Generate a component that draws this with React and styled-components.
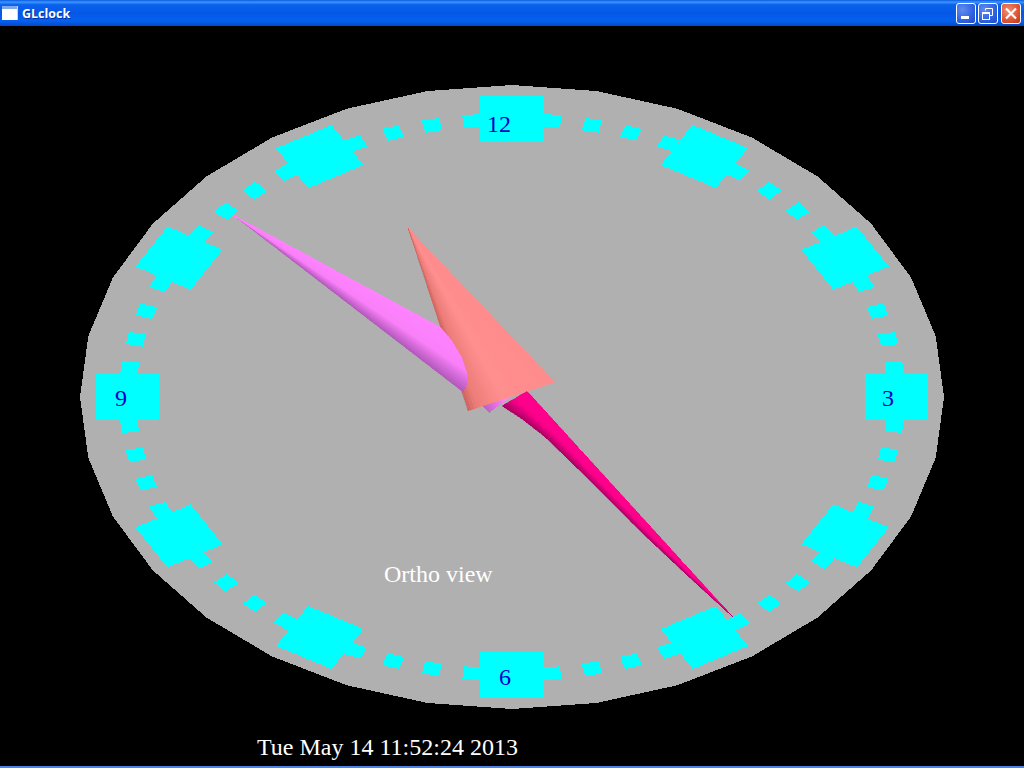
import React from 'react'
import styled, { createGlobalStyle } from 'styled-components'

const GlobalStyle = createGlobalStyle`
  html, body { margin: 0; padding: 0; background: #000; overflow: hidden; }
`

const Win = styled.div`
  width: 1024px;
  height: 768px;
  display: flex;
  flex-direction: column;
  background: #000;
`

const TitleBar = styled.div`
  height: 26px;
  flex: none;
  display: flex;
  align-items: center;
  padding: 0 3px 0 2px;
  box-sizing: border-box;
  background: linear-gradient(180deg, #0a5ae0 0%, #3d95ff 8%, #0a62ec 18%, #0558e6 50%, #0560ee 80%, #0548c8 100%);
`

const TitleIcon = styled.svg`
  width: 16px;
  height: 14px;
  flex: none;
  margin-right: 4px;
`

const TitleText = styled.span`
  flex: 1;
  color: #fff;
  font: bold 12.5px "Open Sans", "Liberation Sans", sans-serif;
  text-shadow: 1px 1px 0 #0a2f9c;
`

const Btn = styled.div`
  width: 20px;
  height: 21px;
  margin-left: ${p => p.$gap}px;
  box-sizing: border-box;
  border: 1px solid #fff;
  border-radius: 3px;
  display: flex;
  align-items: center;
  justify-content: center;
  background: ${p => p.$close
    ? 'radial-gradient(circle at 35% 35%, #f09070 0%, #e0583a 55%, #c03510 100%)'
    : 'radial-gradient(circle at 30% 30%, #5f8cf0 0%, #2f62e0 60%, #2248c8 100%)'};
`

const Canvas = styled.svg`
  display: block;
  flex: 1;
  width: 1024px;
  height: 740px;
  background: #000;
`

const BottomEdge = styled.div`
  height: 2px;
  flex: none;
  background: #4a84e8;
`

const Sharp = styled.polygon`
  shape-rendering: crispEdges;
`

const Label = styled.text`
  font-family: "Liberation Serif", serif;
  font-size: 24px;
  fill: ${p => p.$color};
`

const CX = 512
const CY = 397
const RX = 432
const RY = 312

// unit dial coords -> screen
const toScreen = (u, v) => [CX + RX * u, CY + RY * v]

const pts = list => list.map(p => p.map(n => n.toFixed(2)).join(',')).join(' ')

const dialPoints = Array.from({ length: 32 }, (_, i) => {
  const a = (i * Math.PI) / 16
  return toScreen(Math.cos(a), Math.sin(a))
})

// square on the dial at some minute, radius .89
const tickPoints = (minute, size) => {
  const a = (minute * Math.PI) / 30
  const s = Math.sin(a)
  const c = Math.cos(a)
  const h = size / 2
  return [[-h, -h], [h, -h], [h, h], [-h, h]].map(([t, r]) =>
    toScreen(s * (0.89 + r) + c * t, -c * (0.89 + r) + s * t)
  )
}

const lerp = (a, b, t) => a + (b - a) * t

const mixStops = (stops, t) => {
  let i = 0
  while (i < stops.length - 2 && t > stops[i + 1][0]) i++
  const [t0, c0] = stops[i]
  const [t1, c1] = stops[i + 1]
  const k = Math.min(1, Math.max(0, (t - t0) / (t1 - t0)))
  return `rgb(${c0.map((v, n) => Math.round(lerp(v, c1[n], k))).join(',')})`
}

// walk along a polyline, evenly by length
const sample = (line, count) => {
  const lens = line.slice(1).map((p, i) => Math.hypot(p[0] - line[i][0], p[1] - line[i][1]))
  const total = lens.reduce((a, b) => a + b, 0)
  return Array.from({ length: count + 1 }, (_, n) => {
    let d = (n / count) * total
    let i = 0
    while (i < lens.length - 1 && d > lens[i]) { d -= lens[i]; i++ }
    const k = d / lens[i]
    return [lerp(line[i][0], line[i + 1][0], k), lerp(line[i][1], line[i + 1][1], k)]
  })
}

// a hand is a fan of flat triangles from the tip, like the GL cone
function Hand({ tip, base, stops, slices = 28 }) {
  const edge = sample(base, slices)
  const parts = edge.slice(1).map((p, i) => {
    const col = mixStops(stops, (i + 0.5) / slices)
    return <Sharp key={i} points={pts([tip, edge[i], p])} fill={col} stroke={col} strokeWidth="0.4" />
  })
  // the bright side goes on top so the thin tip stays bright
  return <g>{parts.reverse()}</g>
}

// the long hand flares at its base, so it is strips between its two edges
function Band({ left, right, stops, strips = 16, steps = 60 }) {
  const a = sample(left, steps)
  const b = sample(right, steps)
  const at = t => a.map((p, i) => [lerp(p[0], b[i][0], t), lerp(p[1], b[i][1], t)])
  const parts = Array.from({ length: strips }, (_, n) => {
    const col = mixStops(stops, (n + 0.5) / strips)
    const outline = [...at(n / strips), ...at((n + 1) / strips).reverse()]
    return <Sharp key={n} points={pts(outline)} fill={col} stroke={col} strokeWidth="0.4" />
  })
  return <g>{parts.reverse()}</g>
}

const magentaStops = [[0, [168, 0, 100]], [0.3, [225, 0, 125]], [0.5, [255, 0, 140]], [1, [255, 0, 140]]]
const salmonStops = [[0, [205, 100, 96]], [0.1, [235, 125, 120]], [0.4, [255, 142, 142]], [1, [255, 140, 140]]]
const purpleStops = [[0, [255, 130, 255]], [0.7, [250, 128, 250]], [0.9, [205, 102, 210]], [1, [175, 88, 185]]]

const hourLabels = [
  ['12', 487, 132],
  ['3', 882, 406],
  ['6', 499, 685],
  ['9', 115, 406],
]

export default function App() {
  const minutes = Array.from({ length: 60 }, (_, i) => i)
  return (
    <Win>
      <GlobalStyle />
      <TitleBar>
        <TitleIcon viewBox="0 0 16 14">
          <rect x="0" y="0" width="16" height="14" fill="#fff" />
          <rect x="0" y="0" width="16" height="3" fill="#7fa8e8" />
          <rect x="15" y="0" width="1" height="14" fill="#c8d4ee" />
        </TitleIcon>
        <TitleText>GLclock</TitleText>
        <Btn $gap={0}>
          <svg width="18" height="19" viewBox="0 0 18 19"><rect x="4" y="12" width="8" height="3" fill="#fff" /></svg>
        </Btn>
        <Btn $gap={2}>
          <svg width="18" height="19" viewBox="0 0 18 19" fill="none" stroke="#fff">
            <rect x="3.5" y="8.5" width="7" height="7" strokeWidth="1" />
            <path d="M3.5 9.5h7" strokeWidth="1" />
            <path d="M6.5 6.5V4.5h7v7h-2.5" strokeWidth="1" />
          </svg>
        </Btn>
        <Btn $gap={3} $close>
          <svg width="18" height="19" viewBox="0 0 18 19" stroke="#fff" strokeWidth="2.2"><path d="M4 4.5l10 10M14 4.5l-10 10" /></svg>
        </Btn>
      </TitleBar>
      <Canvas viewBox="0 26 1024 740">
        <Sharp points={pts(dialPoints)} fill="#b0b0b0" />
        {minutes.filter(m => m % 5 !== 0).map(m => (
          <Sharp key={m} points={pts(tickPoints(m, 0.04))} fill="#00ffff" />
        ))}
        {minutes.filter(m => m % 5 === 0).map(m => (
          <Sharp key={m} points={pts(tickPoints(m, 0.148))} fill="#00ffff" />
        ))}
        {hourLabels.map(([t, x, y]) => (
          <Label key={t} x={x} y={y} $color="#0000c8">{t}</Label>
        ))}
        <Band
          left={[[502, 406], [522, 419], [545, 437], [575, 466], [610, 501], [640, 531], [690, 578], [733, 617]]}
          right={[[527, 391], [733, 617]]}
          stops={magentaStops}
        />
        <polygon points="480,404 489,413 512,396 498,394" fill="url(#purpleBack)" shapeRendering="crispEdges" />
        <defs>
          <linearGradient id="purpleBack" gradientUnits="userSpaceOnUse" x1="482" y1="410" x2="505" y2="400">
            <stop offset="0" stopColor="#b45abe" />
            <stop offset="1" stopColor="#ff82ff" />
          </linearGradient>
        </defs>
        <Hand tip={[408, 228]} base={[[468, 411], [555, 382]]} stops={salmonStops} />
        <Hand
          tip={[233, 215]}
          base={[[440, 327], [452, 341], [462, 358], [467, 373], [467, 384], [463, 392]]}
          stops={purpleStops}
        />
        <Label x={384} y={582} $color="#fff">Ortho view</Label>
        <Label x={257} y={755} $color="#fff">Tue May 14 11:52:24 2013</Label>
      </Canvas>
      <BottomEdge />
    </Win>
  )
}
